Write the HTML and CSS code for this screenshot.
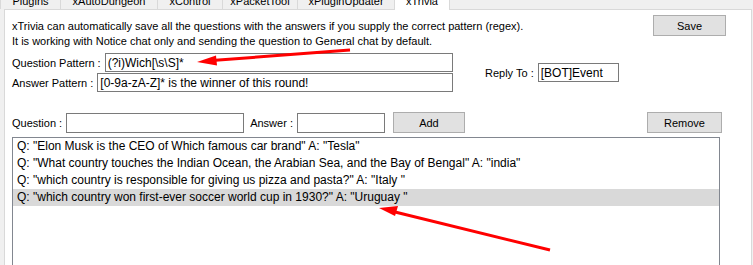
FILE: index.html
```html
<!DOCTYPE html>
<html lang="en">
<head>
    <meta charset="UTF-8">
    <meta name="viewport" content="width=device-width, initial-scale=1.0">
    <title>xTrivia</title>
    <link rel="stylesheet" href="styles.css">
</head>
<body>

<div class="window">
    <div class="tabs">
        <div class="tab tab-plugins">Plugins</div>
        <div class="tab tab-dungeon">xAutoDungeon</div>
        <div class="tab tab-control">xControl</div>
        <div class="tab tab-packet">xPacketTool</div>
        <div class="tab tab-updater">xPluginUpdater</div>
        <div class="tab tab-trivia active">xTrivia</div>
    </div>

    <div class="panel">
        <div class="intro">
            <p class="desc">xTrivia can automatically save all the questions with the answers if you supply the correct pattern (regex).<br>It is working with Notice chat only and sending the question to General chat by default.</p>
            <button class="btn btn-save">Save</button>
        </div>

        <div class="patterns">
            <div class="pattern-fields">
                <div class="field-row">
                    <label for="qPattern">Question Pattern :</label>
                    <input type="text" id="qPattern" class="box" value="(?i)Wich[\s\S]*">
                </div>
                <div class="field-row">
                    <label for="aPattern">Answer Pattern :</label>
                    <input type="text" id="aPattern" class="box" value="[0-9a-zA-Z]* is the winner of this round!">
                </div>
            </div>
            <div class="reply">
                <label for="replyTo">Reply To :</label>
                <input type="text" id="replyTo" class="box reply-box" value="[BOT]Event">
            </div>
        </div>

        <div class="add-row">
            <label for="question">Question :</label>
            <input type="text" id="question" class="box question-box">
            <label for="answer" class="answer-label">Answer :</label>
            <input type="text" id="answer" class="box answer-box">
            <button class="btn btn-add">Add</button>
            <button class="btn btn-remove">Remove</button>
        </div>

        <ul class="list">
            <li>Q: "Elon Musk is the CEO of Which famous car brand" A: "Tesla"</li>
            <li>Q: "What country touches the Indian Ocean, the Arabian Sea, and the Bay of Bengal" A: "india"</li>
            <li>Q: "which country is responsible for giving us pizza and pasta?" A: "Italy "</li>
            <li class="selected">Q: "which country won first-ever soccer world cup in 1930?" A: "Uruguay "</li>
        </ul>
    </div>

    <!-- red annotation arrows -->
    <svg class="arrows" width="753" height="265" viewBox="0 0 753 265">
        <line x1="350" y1="50" x2="212" y2="60.5" stroke="#ff0000" stroke-width="3"/>
        <polygon points="197,62 216,55.5 217,65.5" fill="#ff0000"/>
        <line x1="550" y1="250" x2="393" y2="211.5" stroke="#ff0000" stroke-width="3"/>
        <polygon points="379,208 398,206 395,216" fill="#ff0000"/>
    </svg>
</div>

</body>
</html>
```

FILE: styles.css
```css
html, body {
    margin: 0;
    padding: 0;
    overflow: hidden;
}
body {
    font-family: 'Liberation Sans', Arial, sans-serif;
    font-size: 11px;
    color: #000;
    background: #f0f0f0;
}
.window {
    display: flow-root;
    position: relative;
    width: 753px;
    height: 265px;
}

/* tab strip, mostly scrolled off the top */
.tabs {
    display: flex;
    align-items: flex-end;
    height: 21px;
    margin-top: -12px;
}
.tab {
    box-sizing: border-box;
    height: 21px;
    padding-top: 5px;
    line-height: 15px;
    text-align: center;
    background: #f0f0f0;
    border: 1px solid #d9d9d9;
    border-bottom: none;
    margin-right: -1px;
}
.tab-plugins { width: 61px; }
.tab-dungeon { width: 98px; }
.tab-control { width: 66px; }
.tab-packet { width: 76px; }
.tab-updater { width: 98px; }
.tab-trivia { width: 56px; }
.tab.active {
    position: relative;
    z-index: 1;
    height: 22px;
    margin-bottom: -1px;
    background: #fff;
}

.panel {
    box-sizing: border-box;
    height: 300px;
    margin: 0 1px 0 4px;
    padding: 0 0 0 7px;
    background: #fff;
    border: 1px solid #d9d9d9;
}

.btn {
    box-sizing: border-box;
    height: 21px;
    padding: 0;
    font: inherit;
    color: #000;
    background: #e1e1e1;
    border: 1px solid #adadad;
}

.intro {
    display: flex;
    align-items: flex-start;
    padding-top: 5px;
}
.desc {
    margin: 4px 0 0;
    line-height: 15px;
}
.btn-save {
    width: 73px;
    margin-left: auto;
    margin-right: 25px;
}

.box {
    box-sizing: border-box;
    height: 19px;
    margin: 0;
    padding: 0 2px;
    font: inherit;
    color: #000;
    background: #fff;
    border: 1px solid #7a7a7a;
    outline: none;
}
#qPattern, #aPattern, #replyTo {
    font-size: 12px;
}

.patterns {
    display: flex;
    align-items: center;
    margin-top: 4px;
}
.pattern-fields {
    display: flex;
    flex-direction: column;
    gap: 1px;
    width: 441px;
}
.field-row {
    display: flex;
    align-items: center;
    gap: 4px;
}
.field-row .box {
    flex: 1;
    min-width: 0;
}
.reply {
    display: flex;
    align-items: center;
    gap: 4px;
    margin-left: 32px;
}
.reply-box {
    width: 81px;
}

.add-row {
    display: flex;
    align-items: center;
    margin-top: 20px;
}
.add-row label {
    margin-right: 4px;
}
.question-box {
    width: 178px;
    height: 20px;
}
.answer-label {
    margin-left: 6px;
}
.answer-box {
    width: 88px;
    height: 20px;
}
.btn-add {
    width: 72px;
    margin-left: 8px;
}
.btn-remove {
    width: 75px;
    margin-left: auto;
    margin-right: 29px;
}

.list {
    box-sizing: border-box;
    width: 708px;
    height: 200px;
    margin: 4px 0 0;
    padding: 0;
    list-style: none;
    font-size: 12px;
    background: #fff;
    border: 1px solid #828790;
}
.list li {
    height: 17px;
    line-height: 17px;
    padding-left: 4px;
    white-space: nowrap;
}
.list li.selected {
    background: #d9d9d9;
}

.arrows {
    position: absolute;
    left: 0;
    top: 0;
    pointer-events: none;
}
```
